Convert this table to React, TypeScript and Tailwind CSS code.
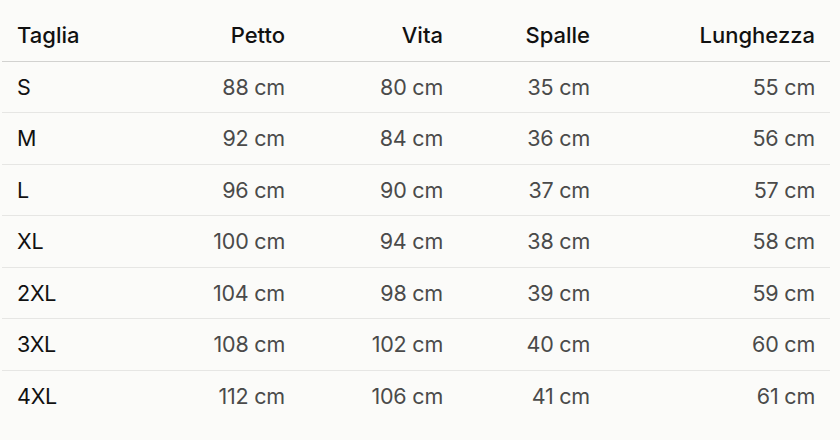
import React from "react";

const rows = [
  ["S", "88 cm", "80 cm", "35 cm", "55 cm"],
  ["M", "92 cm", "84 cm", "36 cm", "56 cm"],
  ["L", "96 cm", "90 cm", "37 cm", "57 cm"],
  ["XL", "100 cm", "94 cm", "38 cm", "58 cm"],
  ["2XL", "104 cm", "98 cm", "39 cm", "59 cm"],
  ["3XL", "108 cm", "102 cm", "40 cm", "60 cm"],
  ["4XL", "112 cm", "106 cm", "41 cm", "61 cm"],
];

export default function App() {
  return (
    <div
      className="w-[840px] h-[440px] bg-[#fbfbf9] pt-[10px] pl-[2px]"
      style={{ fontFamily: "Inter, 'Liberation Sans', sans-serif" }}
    >
      <table className="w-[828px] table-fixed border-collapse text-[21.5px] tracking-[-0.01em]">
        <colgroup>
          <col className="w-[140px]" />
          <col className="w-[158px]" />
          <col className="w-[158px]" />
          <col className="w-[147px]" />
          <col className="w-[225px]" />
        </colgroup>
        <thead>
          <tr className="border-b border-[#d2d2d0] h-[51px] text-[22px] tracking-normal">
            <th className="px-[15px] text-left font-medium text-[#111]">Taglia</th>
            <th className="px-[15px] text-right font-medium text-[#111]">Petto</th>
            <th className="px-[15px] text-right font-medium text-[#111]">Vita</th>
            <th className="px-[15px] text-right font-medium text-[#111]">Spalle</th>
            <th className="px-[15px] text-right font-medium text-[#111]">Lunghezza</th>
          </tr>
        </thead>
        <tbody>
          {rows.map((r, i) => (
            <tr
              key={r[0]}
              className={
                i < rows.length - 1
                  ? "border-b border-[#e6e6e4] h-[51.5px]"
                  : "h-[51.5px]"
              }
            >
              <td className="px-[15px] text-left text-[#111]">{r[0]}</td>
              {r.slice(1).map((v, j) => (
                <td key={j} className="px-[15px] text-right text-[#4a4a4a]">
                  {v}
                </td>
              ))}
            </tr>
          ))}
        </tbody>
      </table>
    </div>
  );
}
